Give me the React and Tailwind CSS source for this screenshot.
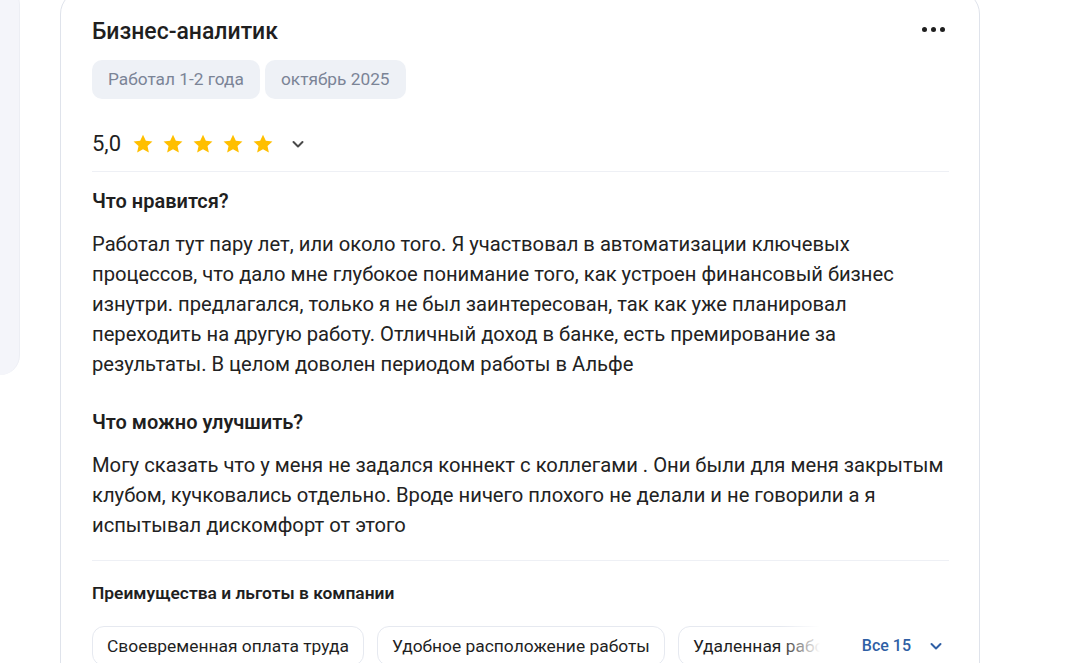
const Star = () => (
  <svg width="22" height="22" viewBox="0 0 24 24" className="text-[#ffbf00]">
    <path
      fill="currentColor"
      d="M12 1.8l3.1 6.6 7.2.8-5.4 4.9 1.5 7.1L12 17.6l-6.4 3.6 1.5-7.1-5.4-4.9 7.2-.8z"
    />
  </svg>
)

const Chevron = ({ className }) => (
  <svg width="14" height="14" viewBox="0 0 14 14" className={className}>
    <path d="M2.5 5l4.5 4.5L11.5 5" fill="none" stroke="currentColor" strokeWidth="2" strokeLinecap="round" strokeLinejoin="round" />
  </svg>
)

const benefits = ["Своевременная оплата труда", "Удобное расположение работы", "Удаленная работа", "ДМС"]

const App = () => {
  return (
    <div className="w-[1073px] h-[663px] overflow-hidden bg-white flex items-start gap-[40px] font-['Roboto',sans-serif] text-[#1f1f1f]">
      <aside className="w-[20px] h-[390px] -mt-[15px] shrink-0 bg-[#f4f5fa] rounded-r-[24px] border-r border-[#eceef4]" />

      <article className="w-[920px] shrink-0 -mt-[10px] border border-[#dfe3eb] rounded-[24px] pt-[27px] pl-[31px] pr-[30px] pb-[24px]">
        <div className="flex items-start justify-between">
          <h2 className="text-[23px] leading-[28px] font-medium">Бизнес-аналитик</h2>
          <button className="flex gap-[4px] mt-[9px] mr-[4px]">
            <span className="w-[5px] h-[5px] rounded-full bg-[#1f1f1f]" />
            <span className="w-[5px] h-[5px] rounded-full bg-[#1f1f1f]" />
            <span className="w-[5px] h-[5px] rounded-full bg-[#1f1f1f]" />
          </button>
        </div>

        <div className="mt-[14px] flex gap-[5px]">
          <span className="h-[39px] px-[16px] rounded-[10px] bg-[#eef1f6] text-[17.3px] text-[#7b8496] flex items-center">Работал 1-2 года</span>
          <span className="h-[39px] px-[16px] rounded-[10px] bg-[#eef1f6] text-[17.3px] text-[#7b8496] flex items-center">октябрь 2025</span>
        </div>

        <div className="mt-[31px] h-[28px] flex items-center">
          <span className="text-[22px] leading-[28px]">5,0</span>
          <div className="ml-[11px] flex gap-[8px]">
            <Star />
            <Star />
            <Star />
            <Star />
            <Star />
          </div>
          <Chevron className="ml-[17px] text-[#4a4a4a]" />
        </div>

        <div className="mt-[13px] h-px bg-[#eef0f5]" />

        <section className="mt-[17px]">
          <h3 className="text-[20px] leading-[24px] font-semibold">Что нравится?</h3>
          <p className="mt-[16px] text-[20.2px] leading-[30px] text-[#222]">
            Работал тут пару лет, или около того. Я участвовал в автоматизации ключевых процессов, что дало мне глубокое понимание того, как устроен финансовый бизнес изнутри. предлагался, только я не был заинтересован, так как уже планировал переходить на другую работу. Отличный доход в банке, есть премирование за результаты. В целом доволен периодом работы в Альфе
          </p>
        </section>

        <section className="mt-[31px]">
          <h3 className="text-[20px] leading-[24px] font-semibold">Что можно улучшить?</h3>
          <p className="mt-[16px] text-[20.2px] leading-[30px] text-[#222]">
            Могу сказать что у меня не задался коннект с коллегами . Они были для меня закрытым клубом, кучковались отдельно. Вроде ничего плохого не делали и не говорили а я испытывал дискомфорт от этого
          </p>
        </section>

        <div className="mt-[20px] h-px bg-[#eef0f5]" />

        <h4 className="mt-[22px] text-[17.4px] leading-[20px] font-semibold">Преимущества и льготы в компании</h4>

        <div className="mt-[23px] flex items-center justify-between">
          <div className="relative w-[728px] overflow-hidden flex gap-[13px]">
            {benefits.map((b) => (
              <span key={b} className="h-[40px] px-[14px] shrink-0 border border-[#e6e9f0] rounded-[12px] text-[17.4px] whitespace-nowrap flex items-center">
                {b}
              </span>
            ))}
            <div className="absolute right-0 top-0 h-full w-[40px] bg-linear-to-r from-transparent to-white" />
          </div>
          <button className="flex items-center gap-[18px] pr-[6px] text-[16px] font-medium text-[#2f5fa5]">
            Все 15
            <Chevron />
          </button>
        </div>
      </article>
    </div>
  )
}

export default App
